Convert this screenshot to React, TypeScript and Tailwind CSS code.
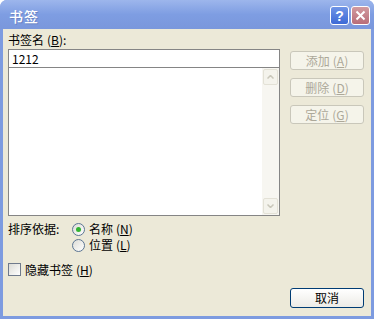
import React from 'react';

const FONT = { fontFamily: '"SimSun", "Noto Sans CJK SC", "Liberation Sans", sans-serif' };

function Key({ k }: { k: string }) {
  return (
    <span className="ml-[3px]">
      (<span className="underline underline-offset-[1px]">{k}</span>)
    </span>
  );
}

function SideButton({ label, k }: { label: string; k: string }) {
  return (
    <div className="w-[74px] h-[19px] flex items-center justify-center rounded-[3px] border border-[#c9c7ba] text-[#aca899] bg-[#f5f4ea] text-[12px] leading-none">
      {label}
      <Key k={k} />
    </div>
  );
}

function Radio({ checked, label, k }: { checked?: boolean; label: string; k: string }) {
  return (
    <div className="flex items-center gap-[4px] h-[16px]">
      <div className="w-[13px] h-[13px] rounded-full border border-[#5b7593] bg-gradient-to-br from-[#dcdcd6] to-[#ffffff] flex items-center justify-center">
        {checked && <div className="w-[5px] h-[5px] rounded-full bg-[#31b431]" />}
      </div>
      <span className="text-[12px] leading-none">
        {label}
        <Key k={k} />
      </span>
    </div>
  );
}

export default function App() {
  return (
    <div className="w-[374px] h-[319px] bg-[#7d9be0] rounded-t-[7px] flex flex-col overflow-hidden select-none" style={FONT}>
      {/* Title bar */}
      <div className="h-[29px] flex items-center justify-between pl-[9px] pr-[4px] bg-gradient-to-b from-[#9db6ec] via-[#7e9de2] to-[#7a97dc]">
        <span className="text-white text-[14px] font-medium tracking-[1px] mt-[3px] [text-shadow:1px_1px_0_#6a84c4]">书签</span>
        <div className="flex gap-[2px] mt-[2px]">
          <div className="w-[19px] h-[19px] rounded-[3px] border border-white bg-gradient-to-b from-[#6f94e6] to-[#3d6ad6] flex items-center justify-center text-white text-[14px] font-bold leading-none" style={{ fontFamily: '"Liberation Sans", sans-serif' }}>
            ?
          </div>
          <div className="w-[19px] h-[19px] rounded-[3px] border border-white bg-gradient-to-b from-[#d29a9f] to-[#b86d78] flex items-center justify-center">
            <svg width="11" height="11" viewBox="0 0 11 11">
              <path d="M1.5 1.5 L9.5 9.5 M9.5 1.5 L1.5 9.5" stroke="white" strokeWidth="2" />
            </svg>
          </div>
        </div>
      </div>

      {/* Client area */}
      <div className="flex-1 mx-[3px] mb-[3px] bg-[#ece9d8] flex text-black">
        <div className="w-[277px] pl-[5px] flex flex-col">
          <div className="h-[20px] pt-[5px] text-[12px] leading-[12px]">
            书签名<Key k="B" />:
          </div>
          <div className="h-[19px] border border-[#858585] bg-white flex items-center px-[3px] text-[12px] leading-none">1212</div>
          <div className="h-[148px] border border-[#858585] border-t-0 bg-white flex justify-end">
            <div className="w-[17px] bg-[#f7f6f1] flex flex-col justify-between">
              <div className="h-[16px] m-[1px] rounded-[2px] border border-[#e3e1d6] bg-[#f4f3ec] flex items-center justify-center">
                <svg width="7" height="4" viewBox="0 0 7 4"><path d="M0.5 3.5 L3.5 0.5 L6.5 3.5" stroke="#c9c7ba" strokeWidth="1.5" fill="none" /></svg>
              </div>
              <div className="h-[16px] m-[1px] rounded-[2px] border border-[#e3e1d6] bg-[#f4f3ec] flex items-center justify-center">
                <svg width="7" height="4" viewBox="0 0 7 4"><path d="M0.5 0.5 L3.5 3.5 L6.5 0.5" stroke="#c9c7ba" strokeWidth="1.5" fill="none" /></svg>
              </div>
            </div>
          </div>
          <div className="flex mt-[5px] text-[12px]">
            <span className="w-[64px] pt-[2px] leading-none">排序依据:</span>
            <div className="flex flex-col">
              <Radio checked label="名称" k="N" />
              <Radio label="位置" k="L" />
            </div>
          </div>
          <div className="flex items-center gap-[4px] mt-[10px]">
            <div className="w-[13px] h-[13px] border border-[#6f7a8c] bg-gradient-to-br from-[#dcdcd6] to-[#ffffff]" />
            <span className="text-[12px] leading-none">
              隐藏书签<Key k="H" />
            </span>
          </div>
        </div>

        <div className="flex-1 pl-[10px] flex flex-col">
          <div className="mt-[22px] flex flex-col gap-[8px]">
            <SideButton label="添加" k="A" />
            <SideButton label="删除" k="D" />
            <SideButton label="定位" k="G" />
          </div>
          <div className="mt-auto mb-[8px]">
            <div className="w-[74px] h-[20px] flex items-center justify-center rounded-[3px] border border-[#003c74] bg-gradient-to-b from-[#ffffff] to-[#ecebe6] text-[12px] leading-none">
              取消
            </div>
          </div>
        </div>
      </div>
    </div>
  );
}
